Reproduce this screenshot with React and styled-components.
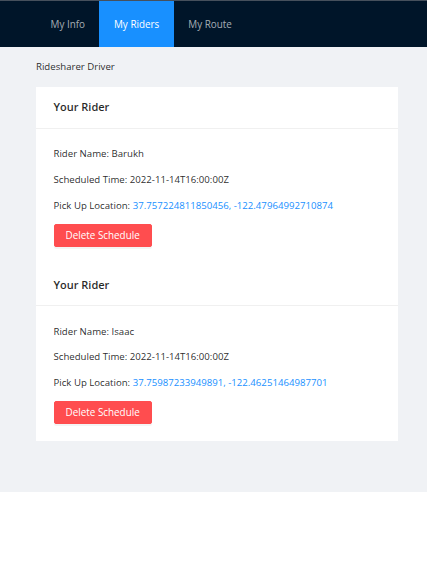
import React from "react";
import styled, { createGlobalStyle } from "styled-components";

const GlobalStyle = createGlobalStyle`
  html, body {
    margin: 0;
    padding: 0;
    background: #ffffff;
  }
  body {
    font-family: "Open Sans", "Noto Sans", sans-serif;
    font-size: 9.65px;
    line-height: 16px;
    color: rgba(0, 0, 0, 0.85);
  }
  * {
    box-sizing: border-box;
  }
`;

const Layout = styled.div`
  display: flex;
  flex-direction: column;
  background: #f0f2f5;
`;

const Header = styled.header`
  height: 47px;
  background: #001529;
  border-top: 1px solid #46505c;
  padding: 0 36px;
  display: flex;
`;

const NavItem = styled.div`
  padding: 0 14.5px;
  display: flex;
  align-items: center;
  font-size: 9.9px;
  color: ${(p) => (p.$active ? "#ffffff" : "rgba(255, 255, 255, 0.65)")};
  background: ${(p) => (p.$active ? "#1890ff" : "transparent")};
`;

const Content = styled.main`
  padding: 0 29px 0 36px;
`;

const Breadcrumb = styled.div`
  margin: 11.85px 0;
  line-height: 16px;
  color: rgba(0, 0, 0, 0.85);
`;

const Card = styled.section`
  background: #ffffff;
`;

const CardHead = styled.div`
  height: 42px;
  padding: 0 17.5px;
  display: flex;
  align-items: center;
  font-size: 11px;
  font-weight: 600;
  color: rgba(0, 0, 0, 0.85);
  border-bottom: 1px solid #f0f0f0;
`;

const CardBody = styled.div`
  padding: 17.5px;
`;

const Line = styled.p`
  margin: 0 0 9.8px;
`;

const Link = styled.span`
  color: #1890ff;
`;

const DangerButton = styled.button`
  height: 23px;
  padding: 0 11px;
  border: 1px solid #ff4d4f;
  border-radius: 2px;
  background: #ff4d4f;
  color: #ffffff;
  font-family: inherit;
  font-size: 9.9px;
  box-shadow: 0 2px 0 rgba(0, 0, 0, 0.045);
  cursor: pointer;
`;

const Footer = styled.footer`
  height: 51px;
`;

const riders = [
  {
    name: "Barukh",
    time: "2022-11-14T16:00:00Z",
    location: "37.757224811850456, -122.47964992710874",
  },
  {
    name: "Isaac",
    time: "2022-11-14T16:00:00Z",
    location: "37.75987233949891, -122.46251464987701",
  },
];

export default function App() {
  return (
    <>
      <GlobalStyle />
      <Layout>
        <Header>
          <NavItem>My Info</NavItem>
          <NavItem $active>My Riders</NavItem>
          <NavItem>My Route</NavItem>
        </Header>
        <Content>
          <Breadcrumb>Ridesharer Driver</Breadcrumb>
          <Card>
            {riders.map((r, i) => (
              <div key={i}>
                <CardHead>Your Rider</CardHead>
                <CardBody>
                  <Line>Rider Name: {r.name}</Line>
                  <Line>Scheduled Time: {r.time}</Line>
                  <Line>
                    Pick Up Location: <Link>{r.location}</Link>
                  </Line>
                  <DangerButton>Delete Schedule</DangerButton>
                </CardBody>
              </div>
            ))}
          </Card>
        </Content>
        <Footer />
      </Layout>
    </>
  );
}
